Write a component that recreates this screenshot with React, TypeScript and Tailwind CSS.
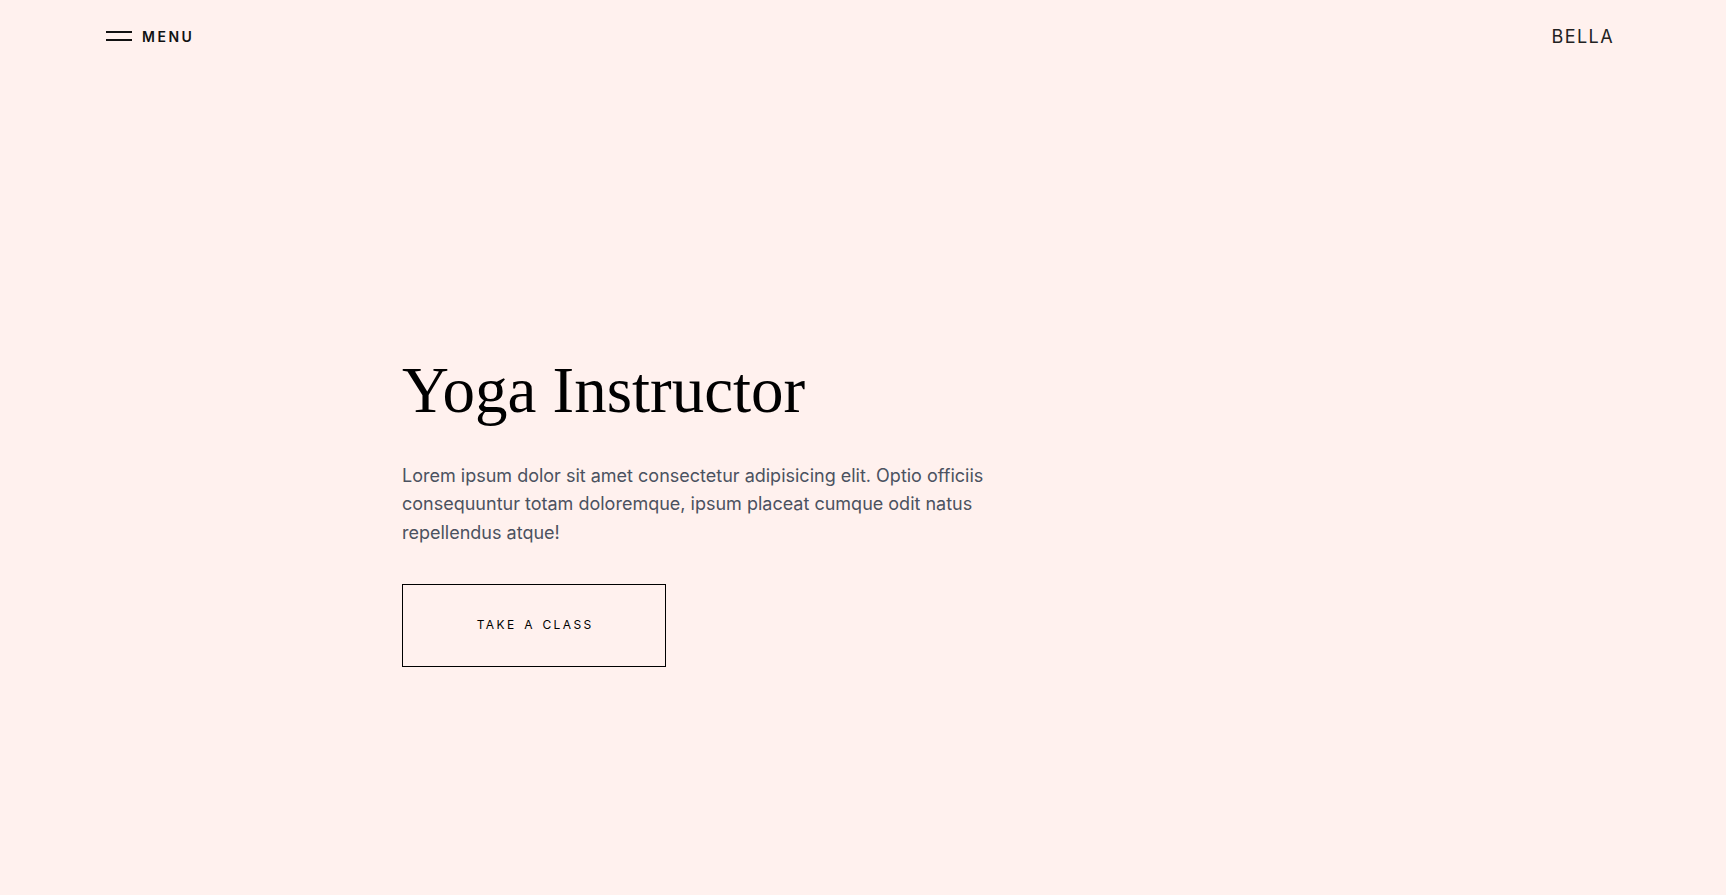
export default function App() {
  return (
    <div className="min-h-screen w-full bg-[#fff1ee] font-['Inter','Liberation_Sans',sans-serif] text-[#111]">
      {/* Top bar */}
      <header className="flex h-[72px] items-center justify-between pl-[106px] pr-[112px]">
        <button className="flex items-center gap-[10px]">
          <span className="flex w-[26px] flex-col gap-[6px]">
            <span className="block h-[2px] w-full bg-[#111]" />
            <span className="block h-[2px] w-full bg-[#111]" />
          </span>
          <span className="text-[14px] font-semibold tracking-[0.18em]">MENU</span>
        </button>
        <span className="text-[18px] font-normal tracking-[0.08em] text-[#222]">BELLA</span>
      </header>

      {/* Hero */}
      <main className="pl-[402px] pt-[283px]">
        <h1 className="font-['Liberation_Serif',serif] text-[65px] leading-[1.1] font-normal text-black">
          Yoga Instructor
        </h1>
        <p className="mt-[35px] max-w-[600px] text-[18px] leading-[1.6] text-[#4b5260]">
          Lorem ipsum dolor sit amet consectetur adipisicing elit. Optio officiis consequuntur totam doloremque, ipsum placeat cumque odit natus repellendus atque!
        </p>
        <button className="mt-[36px] flex h-[83px] w-[264px] items-center justify-center border border-black pl-[0.2em] text-[12px] tracking-[0.2em] [word-spacing:0.15em] text-black">
          TAKE A CLASS
        </button>
      </main>
    </div>
  );
}
